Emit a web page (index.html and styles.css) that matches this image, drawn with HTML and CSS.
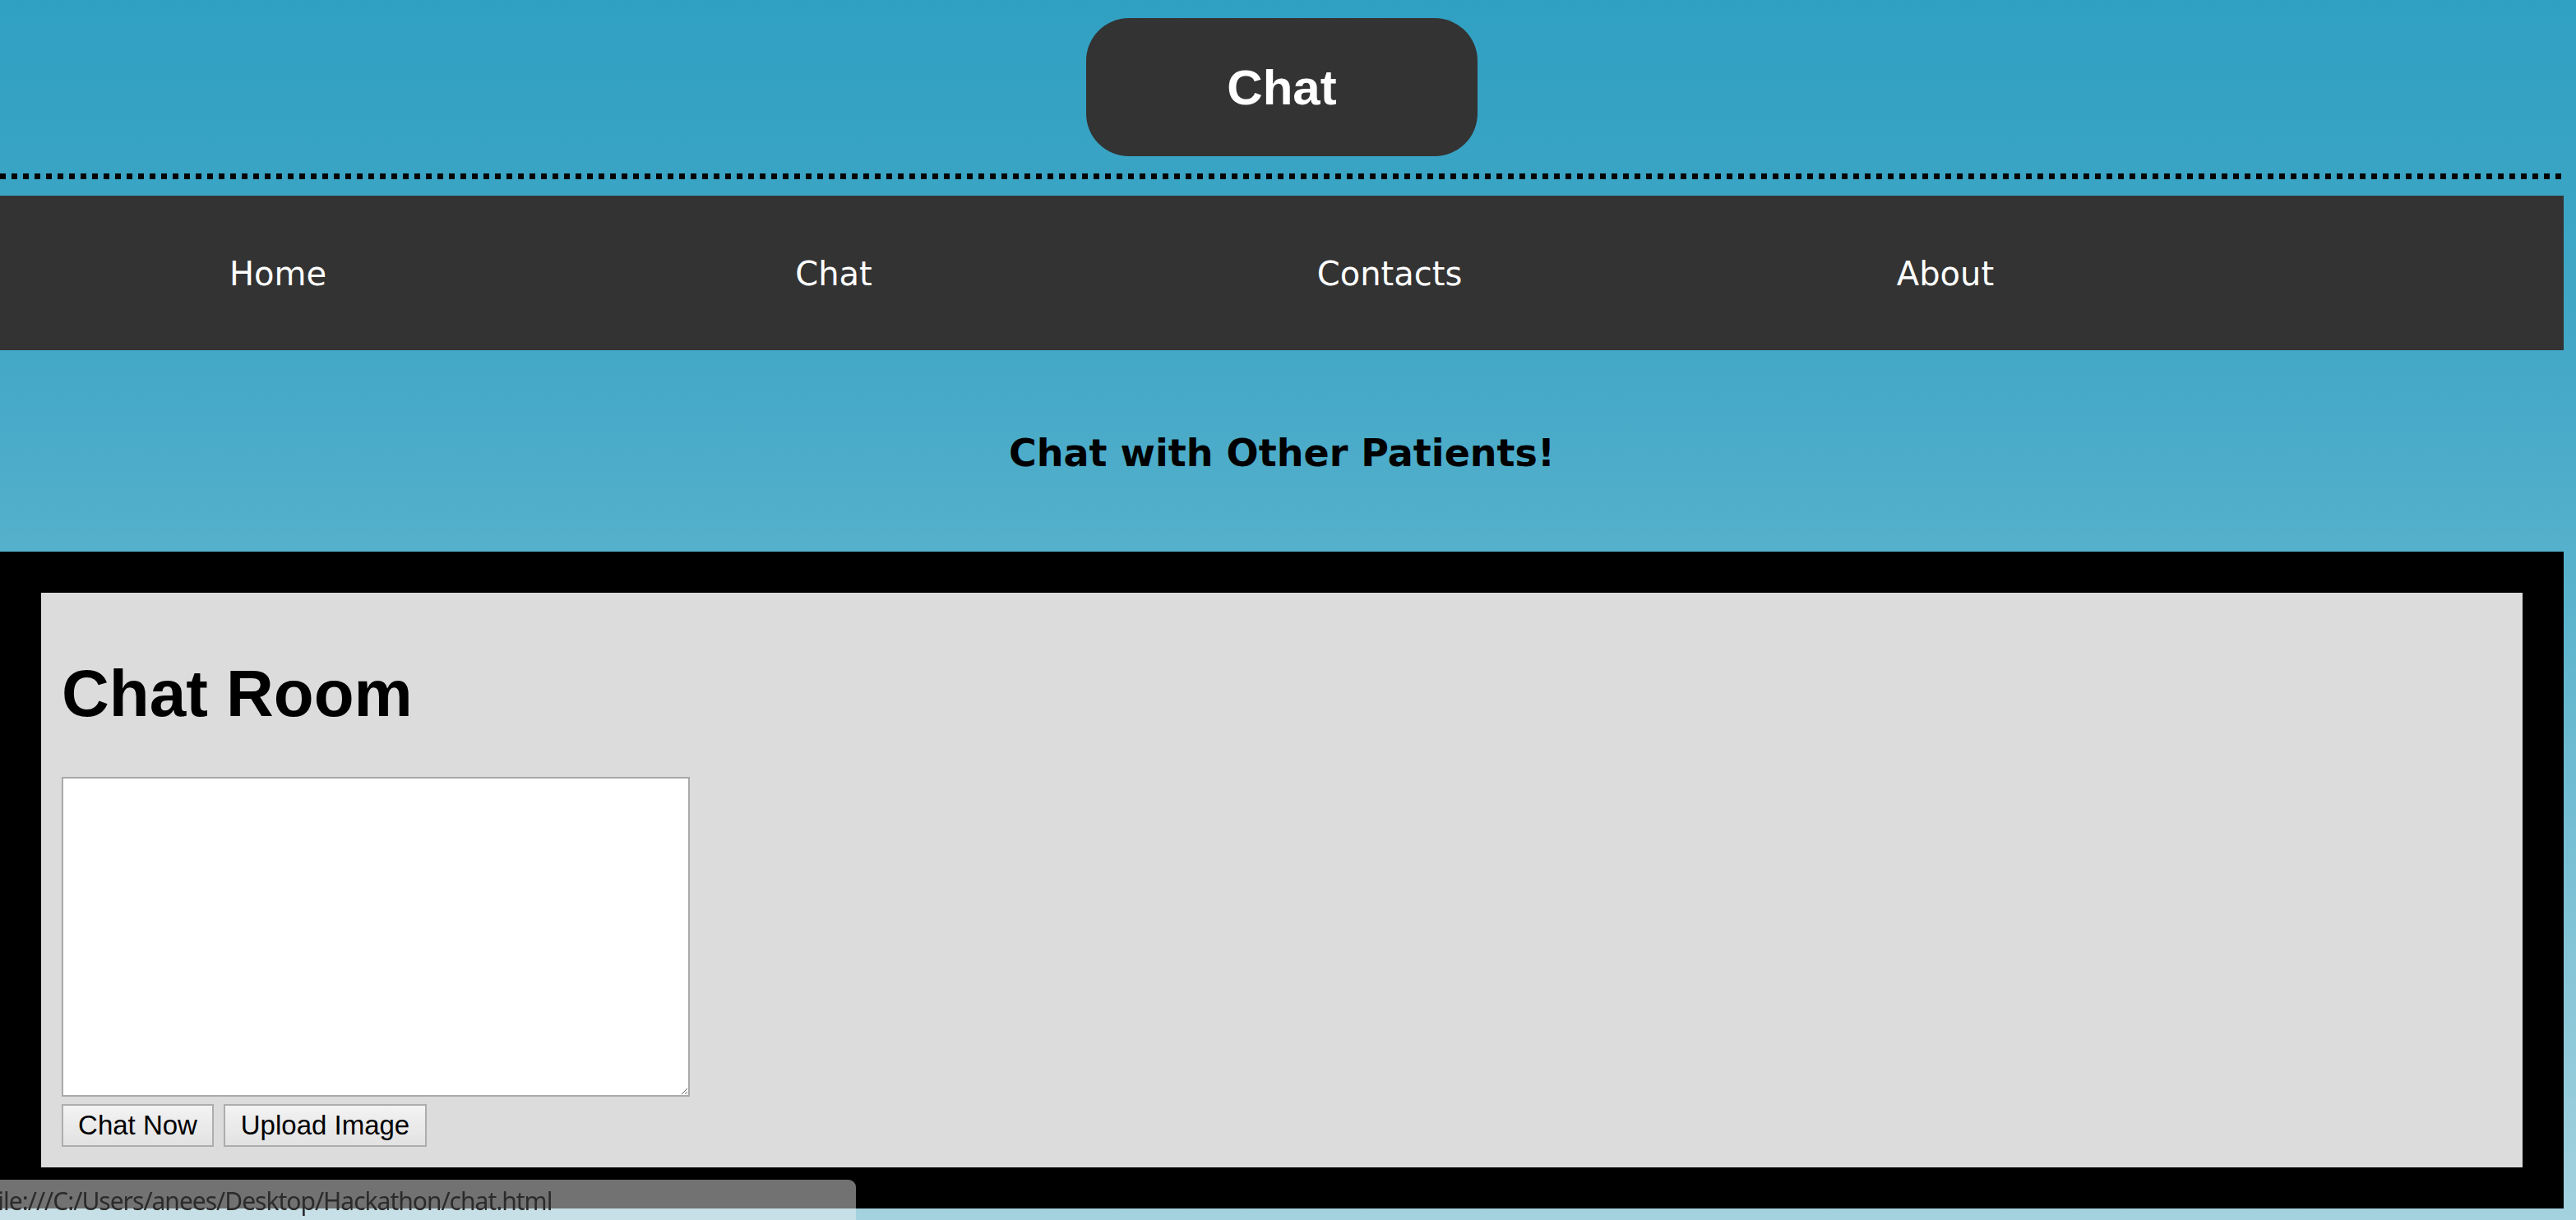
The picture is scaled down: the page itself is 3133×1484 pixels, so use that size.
FILE: index.html
```html
<!DOCTYPE html>
<html lang="en">
<head>
  <meta charset="UTF-8">
  <meta name="viewport" content="width=device-width, initial-scale=1.0">
  <title>Chat</title>
  <link rel="stylesheet" href="styles.css">
</head>
<body>
<div class="page">
  <header class="top">
    <div class="title-pill">Chat</div>
  </header>
  <div class="dots"></div>
  <nav class="menu">
    <a href="#">Home</a>
    <a href="#">Chat</a>
    <a href="#">Contacts</a>
    <a href="#">About</a>
  </nav>
  <h3 class="tagline">Chat with Other Patients!</h3>
  <section class="frame">
    <div class="room">
      <h1>Chat Room</h1>
      <textarea class="msg"></textarea>
      <div class="actions">
        <button class="btn-chat">Chat Now</button>
        <button class="btn-upload">Upload Image</button>
      </div>
    </div>
  </section>
</div>

<!-- browser link preview -->
<div class="status">file:///C:/Users/anees/Desktop/Hackathon/chat.html</div>
</body>
</html>
```
FILE: styles.css
```css
html, body {
  height: 100%;
}
body {
  margin: 0;
  font-family: "DejaVu Sans", Verdana, sans-serif;
  background: linear-gradient(to bottom, #30a0c2 0%, #44a8c7 30%, #58b2cc 48%, #a4d2df 100%);
  overflow: hidden;
}
.page {
  width: 3118px;
}
.top {
  display: flex;
  justify-content: center;
  padding-top: 22px;
}
.title-pill {
  width: 476px;
  height: 168px;
  background: #333;
  border-radius: 52px;
  color: #fff;
  font-family: "Liberation Sans", Arial, sans-serif;
  font-weight: bold;
  font-size: 60px;
  display: flex;
  align-items: center;
  justify-content: center;
}
.dots {
  height: 7px;
  margin-top: 21px;
  background: repeating-linear-gradient(to right, #000 0, #000 7px, transparent 7px, transparent 14px);
  width: 3120px;
}
.menu {
  margin-top: 20px;
  height: 188px;
  background: #333;
  display: flex;
  align-items: center;
  padding-top: 2px;
  box-sizing: border-box;
}
.menu a {
  width: 676px;
  text-align: center;
  color: #fff;
  text-decoration: none;
  font-size: 40px;
}
.tagline {
  margin: 97px 0 92px;
  text-align: center;
  font-size: 46px;
  line-height: 56px;
  font-weight: bold;
  color: #000;
}
.frame {
  background: #000;
  padding: 50px;
}
.room {
  background: #dcdcdc;
  padding: 25px;
  display: flex;
  flex-direction: column;
  align-items: flex-start;
}
.room h1 {
  margin: 52px 0 55px;
  font-family: "Liberation Sans", Arial, sans-serif;
  font-size: 80px;
  line-height: 92px;
  font-weight: bold;
}
.msg {
  box-sizing: border-box;
  width: 764px;
  height: 389px;
  margin: 0;
  border: 2px solid #a9a9a9;
  background: #fff;
}
.actions {
  display: flex;
  gap: 12px;
  margin-top: 9px;
}
.actions button {
  box-sizing: border-box;
  height: 52px;
  padding: 0;
  white-space: nowrap;
  font-family: "Liberation Sans", Arial, sans-serif;
  font-size: 33px;
  color: #000;
  border: 2px solid #adadad;
  background: linear-gradient(to bottom, #f3f3f3, #e2e2e2);
}
.btn-chat {
  width: 185px;
}
.btn-upload {
  width: 247px;
}
.status {
  position: fixed;
  left: 0;
  bottom: 0;
  width: 1041px;
  height: 49px;
  box-sizing: border-box;
  overflow: hidden;
  white-space: nowrap;
  background: rgba(238, 238, 238, 0.48);
  border-top-right-radius: 9px;
  font-family: "Noto Sans", sans-serif;
  font-size: 30px;
  letter-spacing: -1px;
  line-height: 52px;
  color: #2b2b2b;
  text-indent: -12px;
}
```
